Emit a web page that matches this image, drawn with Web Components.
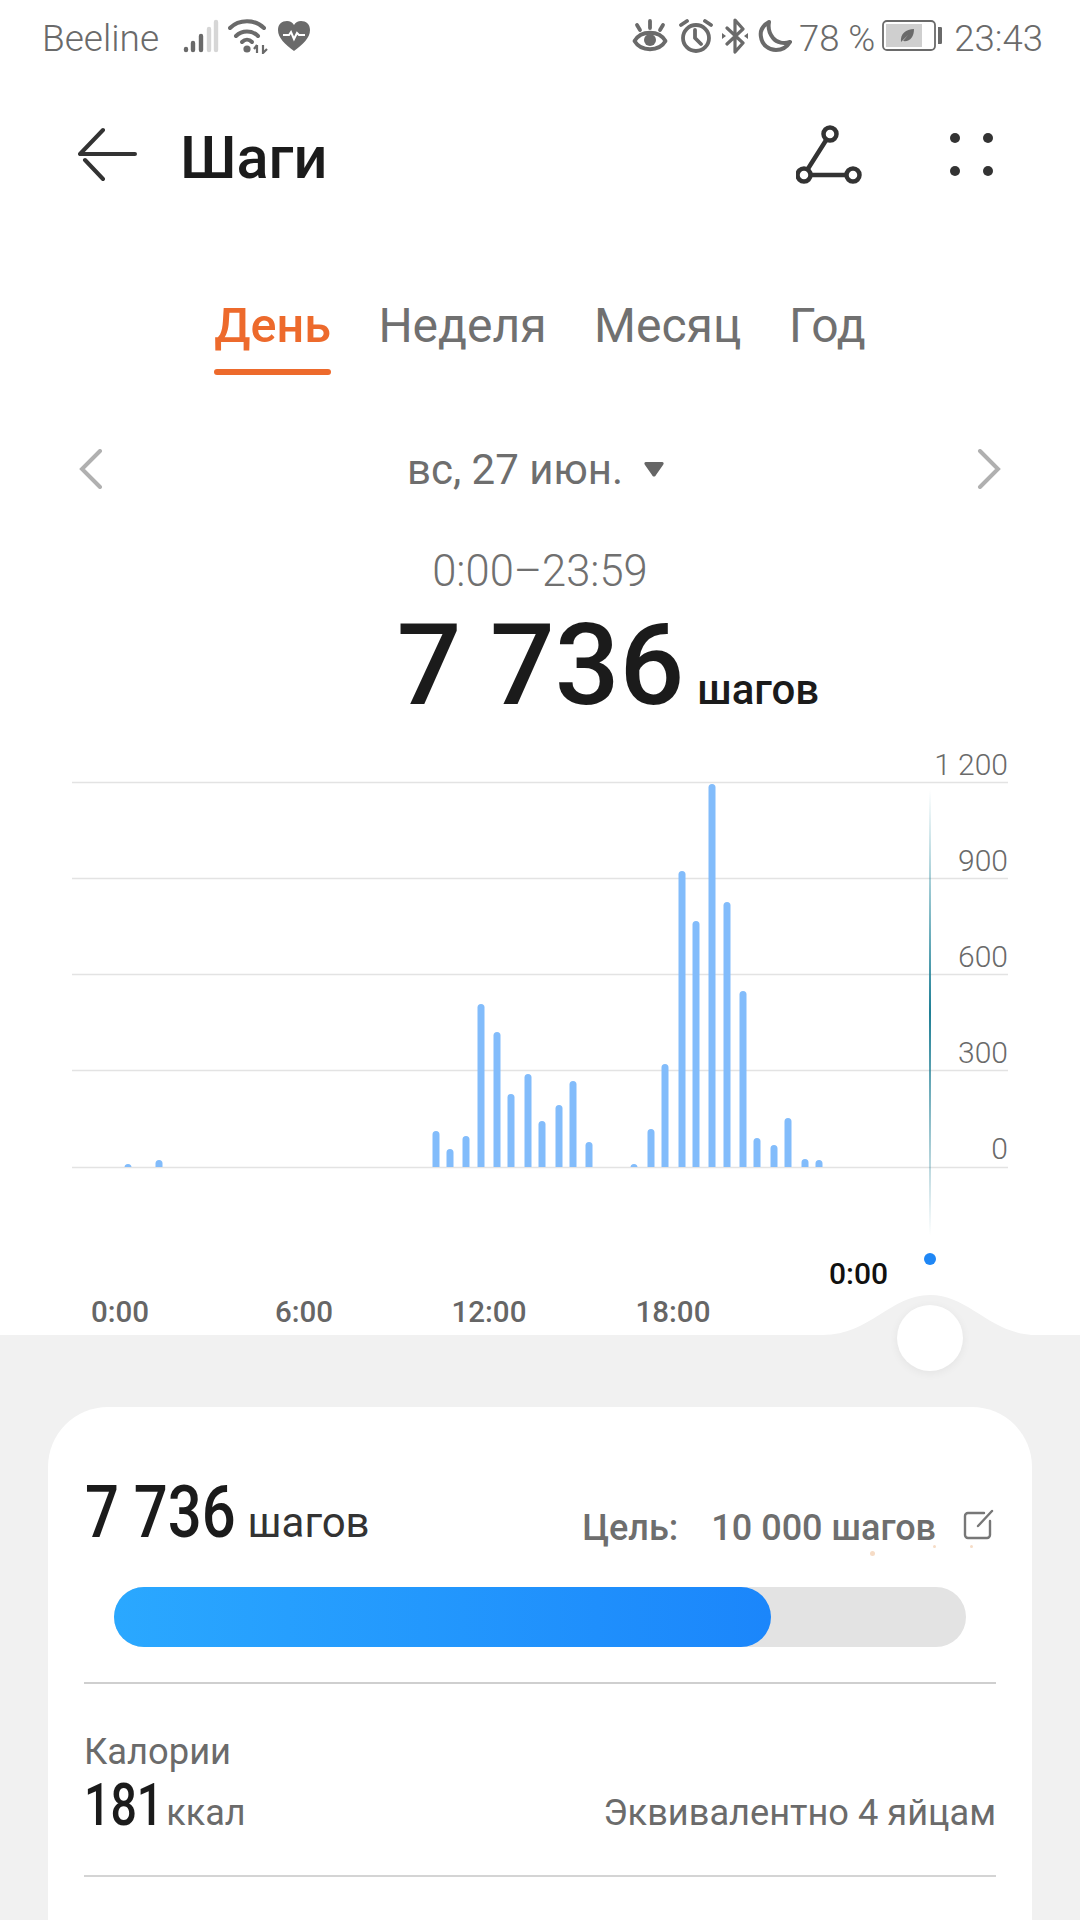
<!DOCTYPE html>
<html lang="ru">
<head>
<meta charset="utf-8">
<title>Шаги</title>
<style>
html, body { margin: 0; padding: 0; background: #fff; }
body { width: 1080px; height: 1920px; overflow: hidden; font-family: Roboto, "Noto Sans", sans-serif; }
</style>
</head>
<body>
<status-bar></status-bar>
<nav-header>Шаги</nav-header>
<period-tabs></period-tabs>
<date-row>вс, 27 июн.</date-row>
<step-total></step-total>
<step-chart></step-chart>
<detail-panel>
  <steps-summary></steps-summary>
  <calorie-row></calorie-row>
</detail-panel>

<script>
// status bar with the phone icons
class StatusBar extends HTMLElement {
  constructor() {
    super();
    const shadow = this.attachShadow({ mode: 'open' });
    shadow.innerHTML = `
<style>
:host { display: flex; align-items: flex-start; justify-content: space-between; height: 76px; padding: 0 37px 0 42px; color: #6a6a6a; font-size: 36.500px; font-weight: 300; }
.side { display: flex; align-items: center; height: 76px; }
svg { display: block; flex: none; margin-bottom: 4px; }
.name { font-size: 37px; }
.pct { margin: 0 7px 0 7px; }
.time { margin-left: 11px; }
</style>
<div class="side">
  <span class="name">Beeline</span>
  <svg style="margin-left:24px" width="36" height="36" viewBox="0 0 36 36">
    <g fill="none" stroke-width="4.400" stroke-linecap="round">
      <path d="M3 32v-1M10 32V25M18 32V18" stroke="#6a6a6a"/>
      <path d="M26 32V11M33 32V4" stroke="#d6d6d6"/>
    </g>
  </svg>
  <svg style="margin-left:9px" width="40" height="36" viewBox="0 0 40 36">
    <g fill="none" stroke="#6a6a6a" stroke-width="4" stroke-linecap="round">
      <path d="M2 10C11 1 27 1 36 10"/>
      <path d="M8 18C14 12 24 12 30 18"/>
      <path d="M14 24C17 21 21 21 24 24"/>
    </g>
    <circle cx="19" cy="31" r="3.600" fill="#6a6a6a"/>
    <path d="M29 27v8M26 31l3-4M35 27v8l4-4" fill="none" stroke="#6a6a6a" stroke-width="2.200"/>
  </svg>
  <svg style="margin-left:9px" width="34" height="32" viewBox="0 0 34 32">
    <path d="M17 31C8 24 1 18 1 10 1 4 5 1 10 1c3 0 5.500 1.500 7 4 1.500-2.500 4-4 7-4 5 0 9 3 9 9 0 8-7 14-16 21z" fill="#6a6a6a"/>
    <path d="M6 15h6l2-3 3 7 3-6 2 2h6" fill="none" stroke="#fff" stroke-width="2"/>
  </svg>
</div>
<div class="side">
  <svg width="36" height="34" viewBox="0 0 36 34">
    <g fill="none" stroke="#6a6a6a" stroke-width="3.800" stroke-linecap="round" stroke-linejoin="round">
      <path d="M2.500 22C9 11 27 11 33.500 22 27 33 9 33 2.500 22z"/>
      <path d="M18 2v7M5 6l3 5M31 6l-3 5"/>
    </g>
    <circle cx="18" cy="21" r="6" fill="#6a6a6a"/>
  </svg>
  <svg style="margin-left:11px" width="34" height="36" viewBox="0 0 34 36">
    <g fill="none" stroke="#6a6a6a" stroke-width="3.800" stroke-linecap="round" stroke-linejoin="round">
      <circle cx="17" cy="20" r="13"/>
      <path d="M16 12v8l6 6M2 7l6-4M32 7l-6-4"/>
    </g>
  </svg>
  <svg style="margin-left:9px" width="26" height="36" viewBox="0 0 26 36">
    <path d="M5 10l16 15-8 9V2l8 9L5 26" fill="none" stroke="#6a6a6a" stroke-width="3.200" stroke-linejoin="round" stroke-linecap="round"/>
    <path d="M0 15l4 3-4 3zM26 15l-4 3 4 3z" fill="#6a6a6a"/>
  </svg>
  <svg style="margin-left:10px" width="34" height="34" viewBox="0 0 34 34">
    <path d="M11 3C4 7 2 13 3 18c1 8 8 13 15 13 6 0 11-3 14-8-6 2-13 1-17-4-4-5-5-11-4-16z" fill="none" stroke="#6a6a6a" stroke-width="4" stroke-linejoin="round"/>
  </svg>
  <span class="pct">78 %</span>
  <svg width="61" height="32" viewBox="0 0 61 32">
    <rect x="1" y="1" width="52" height="29" rx="4" fill="none" stroke="#6a6a6a" stroke-width="1.800"/>
    <rect x="4" y="4" width="36" height="23" fill="#cfcfcf"/>
    <path d="M56 7c4 0 4 0 4 2v13c0 2 0 2-4 2z" fill="#6a6a6a"/>
    <path d="M19 22C18 14 24 9 32 9c0 8-4 13-11 12l5-6-7 7z" fill="#6a6a6a"/>
  </svg>
  <span class="time">23:43</span>
</div>`;
  }
}

class NavHeader extends HTMLElement {
  constructor() {
    super();
    const shadow = this.attachShadow({ mode: 'open' });
    shadow.innerHTML = `
<style>
:host { display: flex; align-items: center; height: 158px; padding-left: 78px; color: #1b1b1b; }
.title { margin: 5px 0 0 42px; font-size: 59.500px; font-weight: 500; }
.actions { margin-left: auto; display: flex; align-items: center; }
svg { display: block; flex: none; }
</style>
<svg width="60" height="56" viewBox="0 0 60 56">
  <g fill="none" stroke="#333" stroke-width="4" stroke-linecap="round">
    <path d="M2 27L25 3M2 27H57M7 33L25 52"/>
  </g>
</svg>
<span class="title"><slot></slot></span>
<div class="actions">
  <svg width="66" height="60" viewBox="0 0 66 60">
    <g fill="#fff" stroke="#333" stroke-width="4.500">
      <path d="M34 9L8 50H57" fill="none"/>
      <circle cx="34" cy="9" r="6.500"/>
      <circle cx="8" cy="50" r="6.500"/>
      <circle cx="57" cy="50" r="6.500"/>
    </g>
  </svg>
  <svg style="margin:0 86px 0 88px" width="44" height="44" viewBox="0 0 44 44" fill="#333">
    <circle cx="5" cy="5" r="5"/><circle cx="38" cy="5" r="5"/>
    <circle cx="5" cy="38" r="5"/><circle cx="38" cy="38" r="5"/>
  </svg>
</div>`;
  }
}

class PeriodTabs extends HTMLElement {
  constructor() {
    super();
    const shadow = this.attachShadow({ mode: 'open' });
    shadow.innerHTML = `
<style>
:host { display: flex; justify-content: center; gap: 47.500px; height: 185px; padding-top: 62px; box-sizing: border-box; font-size: 48px; color: #707070; }
.tab { position: relative; height: 60px; line-height: 60px; }
.on { color: #ed6a2c; font-weight: 500; font-size: 48.500px; }
.on::after { content: ""; position: absolute; left: 0; right: 0; top: 73px; height: 6px; border-radius: 3px; background: #ed6a2c; }
</style>
<span class="tab on">День</span>
<span class="tab">Неделя</span>
<span class="tab">Месяц</span>
<span class="tab">Год</span>`;
  }
}

class DateRow extends HTMLElement {
  constructor() {
    super();
    const shadow = this.attachShadow({ mode: 'open' });
    shadow.innerHTML = `
<style>
:host { display: flex; align-items: center; height: 100px; padding: 0 78px 0 78px; font-size: 42px; color: #6e6e6e; }
svg { display: block; flex: none; }
.mid { flex: 1; display: flex; justify-content: center; align-items: center; gap: 20px; padding-right: 8px; }
</style>
<svg width="26" height="40" viewBox="0 0 26 40"><path d="M22 2L4 20l18 18" fill="none" stroke="#b0b0b0" stroke-width="4" stroke-linecap="round"/></svg>
<div class="mid">
  <span><slot></slot></span>
  <svg width="22" height="18" viewBox="0 0 22 18"><path d="M3 2h16c2 0 2 2 1 3l-7 10c-1 2-3 2-4 0L2 5C1 4 1 2 3 2z" fill="#666"/></svg>
</div>
<svg width="26" height="40" viewBox="0 0 26 40"><path d="M4 2l18 18L4 38" fill="none" stroke="#b0b0b0" stroke-width="4" stroke-linecap="round"/></svg>`;
  }
}

class StepTotal extends HTMLElement {
  constructor() {
    super();
    const shadow = this.attachShadow({ mode: 'open' });
    shadow.innerHTML = `
<style>
:host { display: block; height: 203px; text-align: center; }
.range { font-size: 43.500px; font-weight: 300; color: #707070; line-height: 48px; padding-top: 29px; }
.total { display: flex; justify-content: center; align-items: baseline; gap: 13px; color: #1b1b1b; line-height: 120px; margin-top: 9px; padding-left: 136px; }
.num { font-size: 114px; font-weight: 500; }
.unit { font-size: 42px; font-weight: 500; }
</style>
<div class="range">0:00–23:59</div>
<div class="total"><span class="num">7 736</span><span class="unit">шагов</span></div>`;
  }
}

// [centre x, top y] of each bar, bars stand on the zero line at y 1167
const BARS = [
  [128, 1164], [159, 1160], [436, 1131], [450, 1149], [466, 1136], [481, 1004], [497, 1032],
  [511, 1094], [528, 1074], [542, 1121], [559, 1105], [573, 1081], [589, 1142], [634, 1164],
  [651, 1129], [665, 1064], [682, 871], [696, 921], [712, 784], [727, 902], [743, 991],
  [757, 1138], [774, 1145], [788, 1118], [805, 1159], [819, 1160]
];

class StepChart extends HTMLElement {
  constructor() {
    super();
    const shadow = this.attachShadow({ mode: 'open' });
    const lines = [782, 878, 974, 1070, 1167]
      .map(y => `<path d="M72 ${y + 0.5}H1008" stroke="#e3e3e3" stroke-width="1.500"/>`).join('');
    const bars = BARS
      .map(([x, y]) => `<path d="M${x - 3.5} 1167V${y + 3.5}a3.500 3.500 0 0 1 7 0V1167z"/>`).join('');
    const yLabels = [['1 200', 747], ['900', 843], ['600', 939], ['300', 1035], ['0', 1131]]
      .map(([t, y]) => `<span class="yl" style="top:${y - 722}px">${t}</span>`).join('');
    const xLabels = [['0:00', 120], ['6:00', 304], ['12:00', 489], ['18:00', 673]]
      .map(([t, x]) => `<span class="xl" style="left:${x - 60}px">${t}</span>`).join('');
    shadow.innerHTML = `
<style>
:host { display: block; position: relative; z-index: 1; height: 613px; }
svg { position: absolute; left: 0; top: 0; display: block; }
span { position: absolute; }
.yl { right: 72px; font-size: 30px; font-weight: 300; line-height: 36px; color: #6a6a6a; }
.xl { top: 572px; width: 120px; text-align: center; font-size: 29.500px; line-height: 36px; font-weight: 500; color: #666; }
.cur { left: 829px; top: 534px; font-size: 30px; line-height: 36px; font-weight: 500; color: #111; }
.knob { position: absolute; left: 897px; top: 583px; width: 66px; height: 66px; border-radius: 50%; background: #fff; box-shadow: 0 2px 10px rgba(0,0,0,.06); }
</style>
<svg width="1080" height="613" viewBox="0 722 1080 613">
  <defs>
    <linearGradient id="cursor" x1="0" y1="0" x2="0" y2="1">
      <stop offset="0" stop-color="#1f8a9e" stop-opacity="0"/>
      <stop offset="0.5" stop-color="#1f7f95"/>
      <stop offset="1" stop-color="#1f7f95" stop-opacity="0"/>
    </linearGradient>
  </defs>
  ${lines}
  <g fill="#82bcfb">${bars}</g>
  <rect x="929" y="790" width="2" height="445" fill="url(#cursor)"/>
  <circle cx="930" cy="1259" r="6" fill="#1f87f5"/>
  <path d="M823 1335C870 1335 890 1295 930 1295S990 1335 1037 1335z" fill="#f1f1f1"/>
</svg>
${yLabels}
${xLabels}
<span class="cur">0:00</span>
<div class="knob"></div>`;
  }
}

class DetailPanel extends HTMLElement {
  constructor() {
    super();
    const shadow = this.attachShadow({ mode: 'open' });
    shadow.innerHTML = `
<style>
:host { display: block; background: #f1f1f1; padding: 72px 48px 0; height: 585px; box-sizing: border-box; }
.card { background: #fff; border-radius: 60px 60px 0 0; height: 513px; padding: 0 36px; box-sizing: border-box; }
</style>
<div class="card"><slot></slot></div>`;
  }
}

class StepsSummary extends HTMLElement {
  constructor() {
    super();
    const shadow = this.attachShadow({ mode: 'open' });
    shadow.innerHTML = `
<style>
:host { display: block; position: relative; height: 275px; border-bottom: 2px solid #cfcfcf; box-sizing: content-box; }
.row { display: flex; align-items: baseline; height: 130px; padding-top: 63px; box-sizing: border-box; }
.num { display: inline-block; font-size: 72px; font-weight: 500; color: #1b1b1b; margin: 0 -31px 0 1px; transform: scaleX(.83); transform-origin: left; }
.unit { font-size: 42px; color: #333; margin-left: 12px; }
.goal { margin-left: auto; display: flex; align-items: baseline; font-size: 36px; font-weight: 500; color: #6e6e6e; position: relative; top: 3px; }
.goal b { font-weight: 500; margin-left: 33px; }
svg { display: block; align-self: center; margin: -6px 2px 0 26px; }
.track { position: absolute; left: 30px; right: 30px; top: 180px; height: 60px; border-radius: 30px; background: #e3e3e3; }
.fill { width: 657px; height: 60px; border-radius: 30px; background: linear-gradient(90deg, #2aa8ff, #1b86fb); }
.speck { position: absolute; width: 5px; height: 5px; border-radius: 50%; background: #f6dcc6; }
</style>
<div class="row">
  <span class="num">7 736</span><span class="unit">шагов</span>
  <span class="goal">Цель:<b>10 000 шагов</b>
    <svg width="32" height="32" viewBox="0 0 32 32"><path d="M28 12v14a3 3 0 0 1-3 3H6a3 3 0 0 1-3-3V7a3 3 0 0 1 3-3h16M16 17L30 2" fill="none" stroke="#777" stroke-width="2.400" stroke-linecap="round"/></svg>
  </span>
</div>
<div class="speck" style="left:786px;top:144px"></div>
<div class="speck" style="left:849px;top:138px;width:3px;height:3px"></div>
<div class="speck" style="left:886px;top:138px;width:3px;height:3px"></div>
<div class="track"><div class="fill"></div></div>`;
  }
}

class CalorieRow extends HTMLElement {
  constructor() {
    super();
    const shadow = this.attachShadow({ mode: 'open' });
    shadow.innerHTML = `
<style>
:host { display: block; height: 191px; border-bottom: 2px solid #d4d4d4; position: relative; }
.label { font-size: 36.300px; color: #6b6b6b; line-height: 40px; padding-top: 48px; }
.row { display: flex; align-items: baseline; height: 70px; line-height: 70px; margin-top: -2px; }
.num { display: inline-block; font-size: 60px; font-weight: 500; color: #1b1b1b; margin-right: -22px; transform: scaleX(.775); transform-origin: left; }
.unit { font-size: 36px; color: #6b6b6b; margin-left: 2px; }
.eq { margin-left: auto; font-size: 36.200px; color: #6b6b6b; }
</style>
<div class="label">Калории</div>
<div class="row"><span class="num">181</span><span class="unit">ккал</span><span class="eq">Эквивалентно 4 яйцам</span></div>`;
  }
}

customElements.define('status-bar', StatusBar);
customElements.define('nav-header', NavHeader);
customElements.define('period-tabs', PeriodTabs);
customElements.define('date-row', DateRow);
customElements.define('step-total', StepTotal);
customElements.define('step-chart', StepChart);
customElements.define('detail-panel', DetailPanel);
customElements.define('steps-summary', StepsSummary);
customElements.define('calorie-row', CalorieRow);
</script>
</body>
</html>
